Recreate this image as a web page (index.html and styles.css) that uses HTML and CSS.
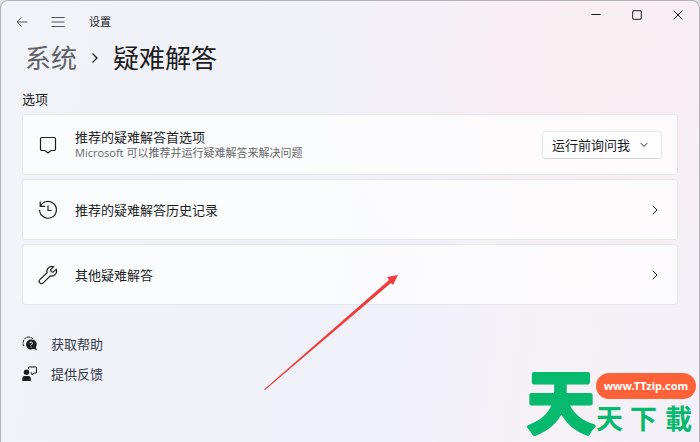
FILE: index.html
```
<!DOCTYPE html>
<html lang="zh-CN">
<head>
<meta charset="utf-8">
<title>设置</title>
<link rel="stylesheet" href="styles.css">
</head>
<body>
<div class="window">
  <header class="titlebar">
    <div class="nav">
      <button class="icon-btn" type="button" aria-label="返回">
        <svg width="14" height="14" viewBox="0 0 14 14"><path d="M12.500 7H2M6.500 2.500L2 7l4.500 4.500"/></svg>
      </button>
      <button class="icon-btn" type="button" aria-label="菜单">
        <svg width="14" height="14" viewBox="0 0 14 14"><path d="M.5 2.500h13M.5 7h13M.5 11.500h13"/></svg>
      </button>
      <span class="app-name">设置</span>
    </div>
    <div class="win-btns">
      <button class="icon-btn" type="button" aria-label="最小化">
        <svg width="10" height="10" viewBox="0 0 10 10"><path d="M.5 4.500h9"/></svg>
      </button>
      <button class="icon-btn" type="button" aria-label="最大化">
        <svg width="10" height="10" viewBox="0 0 10 10"><rect x=".7" y=".7" width="8.600" height="8.600" rx="1.300"/></svg>
      </button>
      <button class="icon-btn" type="button" aria-label="关闭">
        <svg width="10" height="10" viewBox="0 0 10 10"><path d="M.6.6l8.800 8.800M9.400.6L.6 9.400"/></svg>
      </button>
    </div>
  </header>

  <main class="content">
    <h1 class="crumbs">
      <a class="crumb-link" href="#">系统</a>
      <svg width="8" height="12" viewBox="0 0 8 12"><path d="M1.500 1.500L6 6l-4.500 4.500"/></svg>
      <span>疑难解答</span>
    </h1>

    <h2 class="section">选项</h2>

    <div class="cards">
      <div class="card">
        <svg class="card-icon" width="20" height="20" viewBox="0 0 20 20"><path d="M4 2.500h12a1.500 1.500 0 0 1 1.500 1.500v10a1.500 1.500 0 0 1-1.500 1.500h-3L10 18l-3-2.500H4A1.500 1.500 0 0 1 2.500 14V4A1.500 1.500 0 0 1 4 2.500z"/></svg>
        <div class="card-text">
          <label class="card-title" for="pref">推荐的疑难解答首选项</label>
          <p class="card-desc">Microsoft 可以推荐并运行疑难解答来解决问题</p>
        </div>
        <div class="dropdown">
          <select id="pref">
            <option>运行前询问我</option>
          </select>
          <svg width="8" height="6" viewBox="0 0 8 6"><path d="M.8 1.200L4 4.400l3.200-3.200"/></svg>
        </div>
      </div>

      <a class="card" href="#">
        <svg class="card-icon" width="20" height="20" viewBox="0 0 20 20"><path d="M2.400 6.200A8.400 8.400 0 1 1 1.600 10M2.200 1.500V6.300h5M10 5.500V10.500h3.500"/></svg>
        <span class="card-text card-title">推荐的疑难解答历史记录</span>
        <svg class="chevron" width="6" height="10" viewBox="0 0 6 10"><path d="M.8.8L5 5 .8 9.200"/></svg>
      </a>

      <a class="card" href="#">
        <svg class="card-icon" width="20" height="20" viewBox="0 0 20 20"><path d="M15.600 1.700a5 5 0 0 0-6.500 6L1.900 14.600a2.200 2.200 0 0 0 3.300 3.300l7.100-7a5 5 0 0 0 5.900-6.700l-3 3-2-.4-.5-2.100z"/></svg>
        <span class="card-text card-title">其他疑难解答</span>
        <svg class="chevron" width="6" height="10" viewBox="0 0 6 10"><path d="M.8.8L5 5 .8 9.200"/></svg>
      </a>
    </div>

    <nav class="links">
      <a class="link" href="#">
        <svg width="16" height="16" viewBox="0 0 16 16">
          <path d="M2.300 9.500H1.200V6.500C1.500 3 4 1 6.500 1c2 0 3.500.7 4.300 2" stroke-dasharray="3 .6"/>
          <path class="solid" d="M9 3.500a5 5 0 1 0 2.600 9.300L15 14.500l-1.200-3.200A5 5 0 0 0 9 3.500z"/>
          <path class="mark" d="M7.600 7.200c.2-1.600 2.900-1.500 2.900.1 0 1-1.400 1-1.400 2M9.100 10.500v1"/>
        </svg>
        <span>获取帮助</span>
      </a>
      <a class="link" href="#">
        <svg width="16" height="16" viewBox="0 0 16 16">
          <circle class="solid" cx="4.500" cy="6.200" r="2.700"/>
          <path class="solid" d="M.3 15v-2.500A2.500 2.500 0 0 1 2.800 10h3.500a2.500 2.500 0 0 1 2.500 2.500V15z"/>
          <path d="M6.500 3V1h8v6H12l-2 2V7H8.500"/>
        </svg>
        <span>提供反馈</span>
      </a>
    </nav>
  </main>

  <svg class="arrow" width="134" height="116" viewBox="0 0 134 116"><path d="M0 114.500L125 5l-2-3 11-2-5 10-2-2L1 115z"/></svg>

  <svg class="watermark" width="170" height="76" viewBox="0 0 170 76">
    <text class="mark-big" x="0" y="62">天</text>
    <rect class="mark-pill" x="69" y="7" width="100" height="26" rx="13"/>
    <text class="mark-url" x="119" y="24">www.TTzip.com</text>
    <text class="mark-small" y="63"><tspan x="69">天</tspan><tspan x="103">下</tspan><tspan x="138">載</tspan></text>
  </svg>
</div>
</body>
</html>
```
FILE: styles.css
```
* {
  box-sizing: border-box;
}
body {
  margin: 0;
  background: #e4e4e8;
  color: #1c1c1e;
  font-family: "Open Sans", "Noto Sans CJK SC", sans-serif;
  font-size: 13px;
  line-height: 16px;
}
h1, h2, p {
  margin: 0;
  font-weight: 400;
}
a {
  color: inherit;
  text-decoration: none;
}
svg {
  display: block;
  flex: none;
  fill: none;
  stroke: #1c1c1e;
}

.window {
  position: relative;
  min-height: 100vh;
  overflow: hidden;
  border: 1px solid #b4b4b8;
  border-bottom: 0;
  border-radius: 8px 8px 0 0;
  background:
    radial-gradient(circle at 84% 10%, #f9eef2 0, rgba(249, 238, 242, 0) 40%),
    linear-gradient(100deg, #f1f3f8 0, #f1f2f8 40%, #f1f1fa 58%, #f5f1f6 78%, #f4f0f8 100%);
}

/* title bar */
.titlebar {
  display: flex;
  justify-content: space-between;
  align-items: flex-start;
}
.icon-btn {
  display: flex;
  align-items: center;
  justify-content: center;
  padding: 0;
  border: 0;
  background: none;
}
.nav {
  display: flex;
  align-items: center;
  padding: 10px 0 0 3px;
}
.nav .icon-btn {
  width: 36px;
  height: 22px;
}
.nav svg {
  stroke: #55565a;
}
.app-name {
  margin-left: 13px;
  font-size: 11px;
}
.win-btns {
  display: flex;
  padding-right: 1px;
}
.win-btns .icon-btn {
  width: 41px;
  height: 28px;
}

.content {
  padding: 8px 21px 0;
}
.crumbs {
  display: flex;
  align-items: center;
  gap: 14px;
  padding-left: 3px;
  font-size: 26px;
  line-height: 34px;
}
.crumbs svg {
  stroke-width: 1.3;
}
.crumb-link {
  color: #606165;
}
.section {
  margin-top: 16px;
  font-size: 13px;
  line-height: 16px;
}

/* option cards */
.cards {
  display: grid;
  gap: 4px;
  margin-top: 7px;
}
.card {
  display: flex;
  align-items: center;
  gap: 17px;
  height: 61px;
  padding: 0 15px;
  border: 1px solid rgba(90, 80, 110, .07);
  border-radius: 4px;
  background: rgba(255, 255, 255, .72);
  background-clip: padding-box;
}
.card-text {
  flex: 1;
}
.card-title {
  display: block;
}
.card-icon {
  stroke-width: 1.2;
}
.card-desc {
  color: #67676b;
  font-size: 11px;
  line-height: 15px;
}
.chevron {
  margin-right: 4px;
}
.dropdown {
  display: grid;
  align-items: center;
}
.dropdown select,
.dropdown svg {
  grid-area: 1 / 1;
}
.dropdown svg {
  justify-self: end;
  margin-right: 14px;
  pointer-events: none;
}
.dropdown select {
  appearance: none;
  width: 120px;
  height: 28px;
  padding: 0 9px;
  border: 1px solid #ebe9ee;
  border-bottom-color: #d2d0d5;
  border-radius: 4px;
  background: #fefdfe;
  color: #1c1c1e;
  font: inherit;
}

/* help links */
.links {
  display: grid;
  justify-content: start;
  gap: 14px;
  margin-top: 31px;
}
.link {
  display: flex;
  align-items: center;
  gap: 13px;
  color: #34394a;
}
.solid {
  fill: #1c1c1e;
  stroke: none;
}
.mark {
  stroke: #fff;
}

.arrow {
  position: absolute;
  left: 263px;
  top: 274px;
  fill: #f03c3a;
  stroke: none;
}

/* watermark */
.watermark {
  position: absolute;
  right: 2px;
  bottom: 0;
  fill: #06b96c;
  stroke: #06b96c;
  stroke-linejoin: round;
  font-family: "Noto Sans CJK SC", sans-serif;
  font-weight: 700;
}
.mark-big {
  font-size: 68px;
  stroke-width: 4px;
}
.mark-small {
  font-size: 27px;
  stroke: none;
}
.mark-pill {
  fill: #ff6238;
  stroke: none;
}
.mark-url {
  fill: #fff;
  stroke: none;
  font: 700 11px "Noto Sans", sans-serif;
  text-anchor: middle;
}
```
